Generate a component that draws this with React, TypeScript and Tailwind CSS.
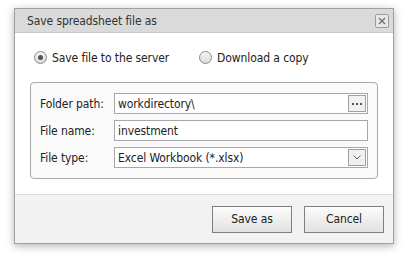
import React, { useState } from 'react';

export default function App() {
  const [target, setTarget] = useState<'server' | 'download'>('server');

  return (
    <div className="w-[406px] h-[257px] bg-white pt-[8px] pl-[14px] font-['DejaVu_Sans_Condensed','DejaVu_Sans',sans-serif] text-[12px] tracking-[-0.1px] text-[#222]">
      <div className="w-[380px] h-[236px] flex flex-col border border-[#a0a0a0] bg-white shadow-[0_2px_8px_rgba(0,0,0,0.3)]">
        {/* Title bar */}
        <div className="h-[24px] shrink-0 flex items-center justify-between bg-[#dadada] pl-[12px] pr-[4px] border-b border-[#c8c8c8]">
          <span className="text-[12px] text-[#333]">Save spreadsheet file as</span>
          <button className="w-[14px] h-[14px] flex items-center justify-center border border-[#9a9a9a] rounded-[2px] bg-[#e8e8e8]">
            <svg width="8" height="8" viewBox="0 0 8 8">
              <path d="M1 1L7 7M7 1L1 7" stroke="#707070" strokeWidth="1.4" />
            </svg>
          </button>
        </div>

        {/* Body */}
        <div className="flex-1 px-[15px] pt-[16px]">
          <div className="h-[17px] flex items-center gap-[30px] pl-[4px]">
            <label className="flex items-center gap-[5px] cursor-pointer" onClick={() => setTarget('server')}>
              <Radio checked={target === 'server'} />
              <span>Save file to the server</span>
            </label>
            <label className="flex items-center gap-[5px] cursor-pointer" onClick={() => setTarget('download')}>
              <Radio checked={target === 'download'} />
              <span>Download a copy</span>
            </label>
          </div>

          <div className="mt-[16px] border border-[#a8a8a8] rounded-[4px] bg-[#fafafa] px-[9px] py-[10px] flex flex-col gap-[6px]">
            <Row label="Folder path:">
              <div className="flex-1 h-[21px] border border-[#a8a8a8] bg-white flex items-center pl-[3px] pr-[1px]">
                <span className="flex-1">workdirectory\</span>
                <button className="w-[18px] h-[17px] border border-[#a0a0a0] bg-[#f0f0f0] flex items-center justify-center">
                  <svg width="10" height="2" viewBox="0 0 10 2">
                    <rect x="0" y="0" width="2" height="2" fill="#555" />
                    <rect x="4" y="0" width="2" height="2" fill="#555" />
                    <rect x="8" y="0" width="2" height="2" fill="#555" />
                  </svg>
                </button>
              </div>
            </Row>
            <Row label="File name:">
              <div className="flex-1 h-[21px] border border-[#a8a8a8] bg-white flex items-center pl-[3px]">
                <span>investment</span>
              </div>
            </Row>
            <Row label="File type:">
              <div className="flex-1 h-[21px] border border-[#a8a8a8] bg-white flex items-center pl-[3px] pr-[1px]">
                <span className="flex-1">Excel Workbook (*.xlsx)</span>
                <button className="w-[18px] h-[17px] border border-[#a0a0a0] bg-[#f0f0f0] flex items-center justify-center">
                  <svg width="8" height="5" viewBox="0 0 8 5">
                    <path d="M0.5 0.5L4 4L7.5 0.5" stroke="#666" strokeWidth="1" fill="none" />
                  </svg>
                </button>
              </div>
            </Row>
          </div>
        </div>

        {/* Footer */}
        <div className="h-[49px] shrink-0 bg-[#f2f2f2] border-t border-[#dcdcdc] flex items-center justify-end gap-[12px] pr-[9px]">
          <FooterButton>Save as</FooterButton>
          <FooterButton>Cancel</FooterButton>
        </div>
      </div>
    </div>
  );
}

function Radio({ checked }: { checked: boolean }) {
  return (
    <span className="w-[13px] h-[13px] rounded-full border border-[#8a8a8a] bg-gradient-to-b from-[#f4f4f4] to-[#dcdcdc] flex items-center justify-center">
      {checked && <span className="w-[5px] h-[5px] rounded-full bg-[#555]" />}
    </span>
  );
}

function Row({ label, children }: { label: string; children: React.ReactNode }) {
  return (
    <div className="flex items-center">
      <span className="w-[74px] shrink-0">{label}</span>
      {children}
    </div>
  );
}

function FooterButton({ children }: { children: React.ReactNode }) {
  return (
    <button className="w-[80px] h-[27px] border border-[#7f7f7f] bg-gradient-to-b from-[#fcfcfc] to-[#e2e2e2] text-[12px] text-[#222]">
      {children}
    </button>
  );
}
